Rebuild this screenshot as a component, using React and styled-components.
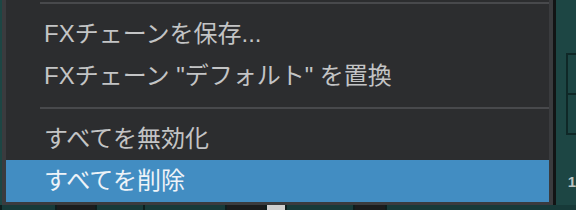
import React from 'react'
import styled, { createGlobalStyle } from 'styled-components'

const GlobalStyle = createGlobalStyle`
    html, body {
        margin: 0;
        padding: 0;
        background: #1d4644;
        overflow: hidden;
    }
`

const items = [
    { type: 'sep', top: true },
    { type: 'item', label: 'FXチェーンを保存...' },
    { type: 'item', label: 'FXチェーン "デフォルト" を置換' },
    { type: 'sep' },
    { type: 'item', label: 'すべてを無効化' },
    { type: 'item', label: 'すべてを削除', active: true },
]

function App() {
    return (
        <Page>
            <GlobalStyle />
            <Menu>
                {items.map((it, i) =>
                    it.type === 'sep'
                        ? <Separator key={i} $top={it.top} />
                        : <Item key={i} $active={it.active}>{it.label}</Item>
                )}
            </Menu>
            <Side>
                <Slot>
                    <SlotCell />
                    <SlotCell />
                </Slot>
                <Digit>1</Digit>
            </Side>
            <Tracks>
                <Track $w={53} />
                <Track $w={38} $dark />
                <Track $w={46} />
                <Track $w={80} />
                <Track $w={38} $dark />
                <Track $w={18} $light />
                <Track $w={66} />
                <Track $w={30} $dark />
                <Track $w={80} />
            </Tracks>
        </Page>
    )
}

export default App

const Page = styled.div`
    position: relative;
    width: 576px;
    height: 210px;
    display: flex;
    align-items: flex-start;
    padding-left: 2px;
    box-sizing: border-box;
    background: #1d4644;
`

const Menu = styled.div`
    width: 553px;
    height: 205px;
    box-sizing: border-box;
    background: #2c2d2f;
    border: 4px solid #3a3b3e;
    border-top: none;
    border-bottom-width: 3px;
    box-shadow: 3px 0 0 #121415;
    display: flex;
    flex-direction: column;
    position: relative;
    z-index: 2;
`

const Separator = styled.div`
    height: ${p => (p.$top ? '13px' : '21px')};
    display: flex;
    align-items: ${p => (p.$top ? 'flex-start' : 'center')};
    padding-left: 34px;
    padding-top: ${p => (p.$top ? '2px' : '0')};
    box-sizing: border-box;

    &::after {
        content: '';
        flex: 1;
        height: 2px;
        background: #48494c;
    }
`

const Item = styled.div`
    height: 42px;
    flex-shrink: 0;
    display: flex;
    align-items: center;
    padding: 0 0 5px 38px;
    box-sizing: border-box;
    font-family: "Liberation Sans", "Noto Sans CJK JP", sans-serif;
    font-size: 24px;
    color: ${p => (p.$active ? '#eef3f8' : '#c3c4c5')};
    background: ${p => (p.$active ? '#428dc2' : 'transparent')};
    white-space: nowrap;
`

const Side = styled.div`
    flex: 1;
    height: 205px;
    display: flex;
    flex-direction: column;
    padding: 53px 0 0 13px;
    box-sizing: border-box;
`

const Slot = styled.div`
    width: 10px;
    height: 82px;
    display: flex;
    flex-direction: column;
    border: 2px solid #0f2827;
    border-right: none;
    box-sizing: border-box;
`

const SlotCell = styled.div`
    flex: 1;
    & + & {
        border-top: 2px solid #0f2827;
    }
`

const Digit = styled.div`
    margin-top: 38px;
    padding-left: 2px;
    font-family: "Liberation Sans", sans-serif;
    font-weight: bold;
    font-size: 15px;
    color: #b9c4c3;
`

const Tracks = styled.div`
    position: absolute;
    left: 0;
    right: 0;
    bottom: 0;
    height: 5px;
    display: flex;
    background: #173a39;
`

const Track = styled.div`
    width: ${p => p.$w}px;
    background: ${p => (p.$dark ? '#1a1c1d' : p.$light ? '#cfcfcf' : '#173a39')};
    border-left: 2px solid #0d1d1d;
`
